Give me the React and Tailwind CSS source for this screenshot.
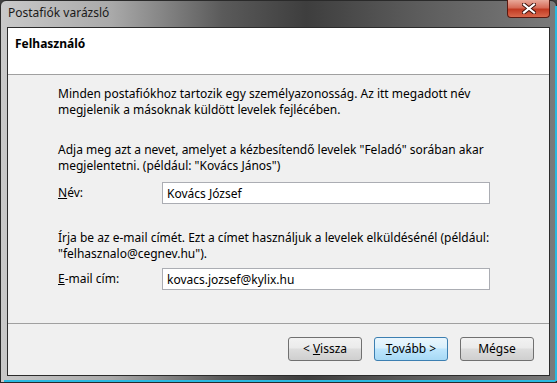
import { useState } from 'react';

function Btn({ children, primary }) {
  return (
    <button
      className={`h-[24px] w-[74px] rounded-[3px] border text-[12px] text-black ${
        primary
          ? 'border-[#3c7fb1] bg-[linear-gradient(#eaf6fd_0%,#d9f0fc_45%,#bee6fd_50%,#a7d9f5_100%)]'
          : 'border-[#707070] bg-[linear-gradient(#f2f2f2_0%,#ebebeb_45%,#dddddd_50%,#cfcfcf_100%)]'
      }`}
    >
      {children}
    </button>
  );
}

export default function App() {
  const [name, setName] = useState('Kovács József');
  const [email, setEmail] = useState('kovacs.jozsef@kylix.hu');

  return (
    <div
      className="relative w-[557px] h-[383px] overflow-hidden bg-[#3f3f3f] text-black"
      style={{ fontFamily: '"Noto Sans", "Open Sans", sans-serif' }}
    >
      {/* glass frame */}
      <div className="absolute inset-0 rounded-t-[6px] border border-[#2a2a2a] bg-[linear-gradient(90deg,#c9c9c9_0%,#a9a9a9_20%,#5a5a5a_40%,#3e3e3e_55%,#5c5c5c_75%,#7a7a7a_100%)]" />
      <div className="absolute right-0 top-[6px] bottom-[2px] w-[2px] bg-[#29b9e0]" />
      <div className="absolute left-[4px] right-[2px] bottom-[1px] h-[2px] bg-[#29b9e0]" />

      <div className="relative flex flex-col h-full">
        {/* title bar */}
        <div className="flex h-[27px] items-start">
          <span className="pl-[8px] pt-[5px] text-[12px] leading-[16px] text-[#1a1a1a]">Postafiók varázsló</span>
          <div className="ml-auto mr-[7px] flex h-[18px] w-[43px] items-center justify-center rounded-b-[4px] border border-t-0 border-[#5a1a10] bg-[linear-gradient(#e9a99a_0%,#d66c58_45%,#c13a22_55%,#d9684c_100%)]">
            <svg width="14" height="11" viewBox="0 0 14 11">
              <path d="M2 1.5 L12 9.5 M12 1.5 L2 9.5" stroke="#3a0e08" strokeWidth="4" strokeLinecap="square" />
              <path d="M2 1.5 L12 9.5 M12 1.5 L2 9.5" stroke="#ffffff" strokeWidth="2.2" strokeLinecap="square" />
            </svg>
          </div>
        </div>

        {/* client area */}
        <div className="mx-[7px] mb-[7px] flex flex-1 flex-col border border-[#2b2b2b] bg-[#f0f0f0]">
          <div className="h-[47px] border-b border-[#a0a0a0] bg-white px-[7px] pt-[8px]">
            <h1 className="text-[12px] font-bold leading-[16px]">Felhasználó</h1>
          </div>

          <div className="flex flex-1 flex-col pl-[50px] pr-[59px] pt-[11px] text-[12px] leading-[16px]">
            <p>
              Minden postafiókhoz tartozik egy személyazonosság. Az itt megadott név megjelenik a másoknak küldött levelek fejlécében.
            </p>
            <p className="mt-[24px]">
              Adja meg azt a nevet, amelyet a kézbesítendő levelek "Feladó" sorában akar megjelentetni. (például: "Kovács János")
            </p>
            <div className="mt-[8px] flex items-center">
              <label className="w-[104px]"><span className="underline">N</span>év:</label>
              <input
                value={name}
                onChange={e => setName(e.target.value)}
                className="h-[22px] w-[328px] border border-[#abadb3] bg-white px-[4px] text-[12px] outline-none"
              />
            </div>
            <p className="mt-[26px]">
              Írja be az e-mail címét. Ezt a címet használjuk a levelek elküldésénél (például: "felhasznalo@cegnev.hu").
            </p>
            <div className="mt-[6px] flex items-center">
              <label className="w-[104px]"><span className="underline">E</span>-mail cím:</label>
              <input
                value={email}
                onChange={e => setEmail(e.target.value)}
                className="h-[22px] w-[328px] border border-[#abadb3] bg-white px-[4px] text-[12px] outline-none"
              />
            </div>
          </div>

          <div className="flex h-[52px] items-start justify-end gap-[12px] border-t border-[#a0a0a0] pr-[15px] pt-[13px]">
            <Btn>&lt; <span className="underline">V</span>issza</Btn>
            <Btn primary><span className="underline">T</span>ovább &gt;</Btn>
            <Btn>Mégse</Btn>
          </div>
        </div>
      </div>
    </div>
  );
}
